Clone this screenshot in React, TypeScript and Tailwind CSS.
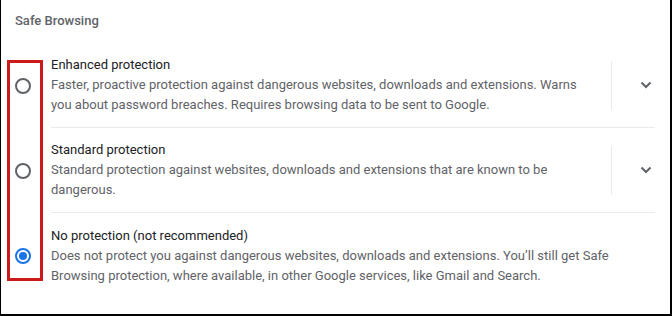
const font = { fontFamily: 'Roboto, "Liberation Sans", sans-serif' }

type Option = {
  title: string
  desc: string
  checked?: boolean
  expandable?: boolean
}

const OPTIONS: Option[] = [
  {
    title: 'Enhanced protection',
    desc: 'Faster, proactive protection against dangerous websites, downloads and extensions. Warns you about password breaches. Requires browsing data to be sent to Google.',
    expandable: true,
  },
  {
    title: 'Standard protection',
    desc: 'Standard protection against websites, downloads and extensions that are known to be dangerous.',
    expandable: true,
  },
  {
    title: 'No protection (not recommended)',
    desc: 'Does not protect you against dangerous websites, downloads and extensions. You’ll still get Safe Browsing protection, where available, in other Google services, like Gmail and Search.',
    checked: true,
  },
]

function Radio({ checked }: { checked?: boolean }) {
  return (
    <span
      className={`w-4 h-4 rounded-full border-2 flex items-center justify-center ${
        checked ? 'border-[#1a73e8]' : 'border-[#5f6368]'
      }`}
    >
      {checked && <span className="w-2 h-2 rounded-full bg-[#1a73e8]" />}
    </span>
  )
}

function Chevron() {
  return (
    <svg width="12" height="8" viewBox="0 0 12 8" fill="none">
      <path d="M1.5 1.5 L6 6 L10.5 1.5" stroke="#5f6368" strokeWidth="2" />
    </svg>
  )
}

export default function App() {
  return (
    <div
      className="relative w-[672px] h-[316px] bg-white border-l border-r-2 border-b-2 border-black text-[13px]"
      style={font}
    >
      <div className="h-[43px] pl-[14px] pt-[11px] text-[13px] font-medium text-[#5f6368] leading-5">Safe Browsing</div>

      <div className="flex flex-col">
        {OPTIONS.map((o, i) => (
          <div key={o.title} className="flex h-[85px]">
            <div className="w-[50px] flex items-center pl-[14px]">
              <Radio checked={o.checked} />
            </div>
            <div
              className={`flex-1 mr-[15px] flex items-center ${
                i < OPTIONS.length - 1 ? 'border-b border-[#e8eaed]' : ''
              }`}
            >
              <div className={`flex-1 leading-5 ${o.expandable ? 'pr-[16px]' : ''}`}>
                <div className="text-[#202124]">{o.title}</div>
                <div className="text-[#5f6368]">{o.desc}</div>
              </div>
              {o.expandable && (
                <div className="flex items-center h-[49px]">
                  <div className="w-px h-full bg-[#e8eaed]" />
                  <div className="w-[43px] flex justify-end pr-[3px]">
                    <Chevron />
                  </div>
                </div>
              )}
            </div>
          </div>
        ))}
      </div>

      {/* red annotation box */}
      <div className="absolute left-[6px] top-[60px] w-[36px] h-[221px] border-[3px] border-[#cc1a1a]" />
    </div>
  )
}
